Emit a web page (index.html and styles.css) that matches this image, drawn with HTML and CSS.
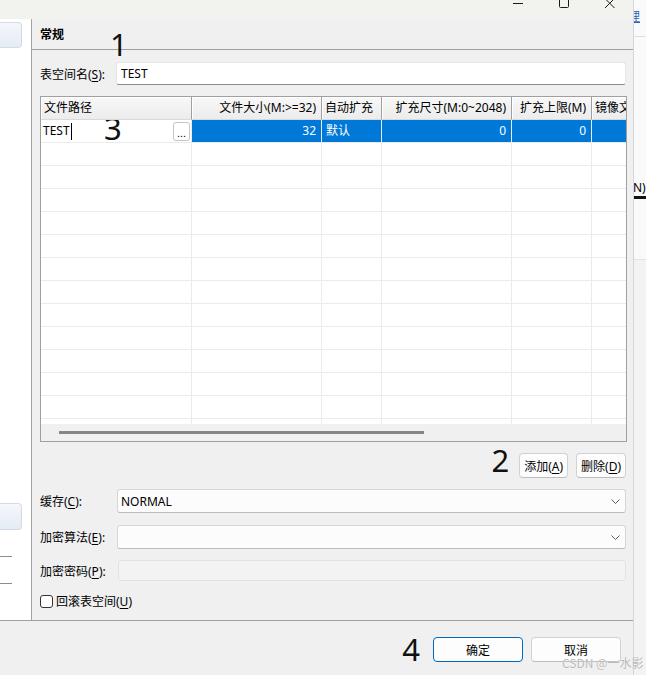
FILE: index.html
```html
<!DOCTYPE html>
<html lang="zh-CN">
<head>
<meta charset="UTF-8" />
<meta name="viewport" content="width=device-width, initial-scale=1" />
<title>表空间</title>
<link rel="stylesheet" href="styles.css">
</head>
<body>

<div class="screen">
  <div class="dialog">
    <div class="titlebar">
      <span class="winbtn"><svg width="10" height="8" viewBox="0 0 10 8"><path d="M0 3.5H10" /></svg></span>
      <span class="winbtn"><svg width="10" height="8" viewBox="0 0 10 8"><path d="M0.5 0V6.5Q0.5 7.5 1.5 7.5H8.5Q9.5 7.5 9.5 6.5V0" /></svg></span>
      <span class="winbtn"><svg width="10" height="8" viewBox="0 0 10 8"><path d="M0 -1.5L9.5 8M9.5 -1.5L0 8" /></svg></span>
    </div>

    <div class="content">
      <div class="sidebar">
        <div class="side-item"></div>
        <div class="side-item lower"></div>
        <div class="side-line"></div>
        <div class="side-line"></div>
      </div>

      <div class="main">
        <div class="section-title">常规<span class="mark mark-1">1</span></div>

        <div class="form">
          <div class="field name-row">
            <label>表空间名(<u>S</u>):</label>
            <div class="textbox">TEST</div>
          </div>

          <div class="grid">
            <div class="grid-row head">
              <div class="cell">文件路径</div>
              <div class="cell num">文件大小(M:&gt;=32)</div>
              <div class="cell">自动扩充</div>
              <div class="cell num">扩充尺寸(M:0~2048)</div>
              <div class="cell num">扩充上限(M)</div>
              <div class="cell">镜像文件</div>
            </div>
            <div class="grid-body">
              <div class="grid-row selected">
                <div class="cell editing">TEST<span class="caret"></span><span class="mark mark-3">3</span><span class="browse">...</span></div>
                <div class="cell num">32</div>
                <div class="cell">默认</div>
                <div class="cell num">0</div>
                <div class="cell num">0</div>
                <div class="cell"></div>
              </div>
              <div class="grid-row"><div class="cell"></div><div class="cell"></div><div class="cell"></div><div class="cell"></div><div class="cell"></div><div class="cell"></div></div>
              <div class="grid-row"><div class="cell"></div><div class="cell"></div><div class="cell"></div><div class="cell"></div><div class="cell"></div><div class="cell"></div></div>
              <div class="grid-row"><div class="cell"></div><div class="cell"></div><div class="cell"></div><div class="cell"></div><div class="cell"></div><div class="cell"></div></div>
              <div class="grid-row"><div class="cell"></div><div class="cell"></div><div class="cell"></div><div class="cell"></div><div class="cell"></div><div class="cell"></div></div>
              <div class="grid-row"><div class="cell"></div><div class="cell"></div><div class="cell"></div><div class="cell"></div><div class="cell"></div><div class="cell"></div></div>
              <div class="grid-row"><div class="cell"></div><div class="cell"></div><div class="cell"></div><div class="cell"></div><div class="cell"></div><div class="cell"></div></div>
              <div class="grid-row"><div class="cell"></div><div class="cell"></div><div class="cell"></div><div class="cell"></div><div class="cell"></div><div class="cell"></div></div>
              <div class="grid-row"><div class="cell"></div><div class="cell"></div><div class="cell"></div><div class="cell"></div><div class="cell"></div><div class="cell"></div></div>
              <div class="grid-row"><div class="cell"></div><div class="cell"></div><div class="cell"></div><div class="cell"></div><div class="cell"></div><div class="cell"></div></div>
              <div class="grid-row"><div class="cell"></div><div class="cell"></div><div class="cell"></div><div class="cell"></div><div class="cell"></div><div class="cell"></div></div>
              <div class="grid-row"><div class="cell"></div><div class="cell"></div><div class="cell"></div><div class="cell"></div><div class="cell"></div><div class="cell"></div></div>
              <div class="grid-row"><div class="cell"></div><div class="cell"></div><div class="cell"></div><div class="cell"></div><div class="cell"></div><div class="cell"></div></div>
              <div class="grid-row"><div class="cell"></div><div class="cell"></div><div class="cell"></div><div class="cell"></div><div class="cell"></div><div class="cell"></div></div>
            </div>
            <div class="hscroll"><div class="thumb"></div></div>
          </div>

          <div class="grid-actions">
            <span class="mark">2</span>
            <button class="btn">添加(<u>A</u>)</button>
            <button class="btn">删除(<u>D</u>)</button>
          </div>

          <div class="field cache-row">
            <label>缓存(<u>C</u>):</label>
            <div class="combo">NORMAL<svg class="chevron" width="9" height="5" viewBox="0 0 9 5"><path d="M0.5 0.5L4.5 4.5L8.5 0.5" /></svg></div>
          </div>

          <div class="field algo-row">
            <label>加密算法(<u>E</u>):</label>
            <div class="combo"><svg class="chevron" width="9" height="5" viewBox="0 0 9 5"><path d="M0.5 0.5L4.5 4.5L8.5 0.5" /></svg></div>
          </div>

          <div class="field pwd-row">
            <label>加密密码(<u>P</u>):</label>
            <div class="textbox disabled"></div>
          </div>

          <div class="check-row">
            <span class="checkbox"></span>
            <span>回滚表空间(<u>U</u>)</span>
          </div>
        </div>
      </div>
    </div>

    <div class="footer">
      <span class="mark">4</span>
      <button class="btn wide primary">确定</button>
      <button class="btn wide">取消</button>
    </div>
  </div>

  <div class="behind">
    <span class="behind-link">理</span>
    <div class="behind-rule"></div>
    <span class="behind-text">N)</span>
    <div class="behind-bar"></div>
    <div class="behind-lower"></div>
  </div>
</div>

<div class="watermark">CSDN @一水影</div>

</body>
</html>
```

FILE: styles.css
```css
body {
  margin: 0;
  width: 646px;
  height: 675px;
  overflow: hidden;
  font-family: "Noto Sans", "Noto Sans CJK SC", sans-serif;
  font-size: 12px;
  color: #000;
  background: #f0f0f0;
  position: relative;
}

u {
  text-decoration: underline;
  text-underline-offset: 2px;
}

.screen {
  display: flex;
  height: 675px;
}

.dialog {
  width: 634px;
  flex: none;
  display: flex;
  flex-direction: column;
  background: #f0f0f0;
}

/* window caption, top cut off */
.titlebar {
  height: 19px;
  background: #f2f3ee;
  display: flex;
  justify-content: flex-end;
  padding-right: 1px;
}

.winbtn {
  width: 46px;
  display: flex;
  justify-content: center;
  align-items: flex-start;
}

.winbtn svg {
  fill: none;
  stroke: #1a1a1a;
  stroke-width: 1;
}

.content {
  height: 601px;
  display: flex;
}

/* navigation column on the left */
.sidebar {
  width: 32px;
  flex: none;
  box-sizing: border-box;
  border-right: 1px solid #a3a3a3;
  background: #fff;
  display: flex;
  flex-direction: column;
}

.side-item {
  width: 22px;
  height: 26px;
  margin-top: 3px;
  box-sizing: border-box;
  border: 1px solid #d4dbe4;
  border-left: none;
  border-radius: 0 4px 4px 0;
  background: linear-gradient(#f4f7fb, #e6ecf4);
}

.side-item.lower {
  height: 27px;
  margin-top: 455px;
}

.side-line {
  width: 12px;
  height: 1px;
  margin-top: 26px;
  background: #8c8c8c;
}

.main {
  flex: 1;
  min-width: 0;
  border-right: 1px solid #d6d6d6;
  display: flex;
  flex-direction: column;
}

.section-title {
  height: 31px;
  box-sizing: border-box;
  padding: 6px 0 0 8px;
  line-height: 17px;
  font-family: "Noto Sans CJK SC", sans-serif;
  font-weight: bold;
  border-bottom: 1px solid #a0a0a0;
  position: relative;
}

/* hand-written step numbers */
.mark {
  font-family: "Noto Sans", sans-serif;
  font-size: 31px;
  line-height: 1;
  font-weight: 400;
  color: #111;
}

.mark-1 {
  position: absolute;
  left: 78px;
  top: 10px;
}

.mark-3 {
  position: absolute;
  left: 63px;
  top: -7px;
}

.form {
  padding: 0 7px 0 8px;
  min-width: 0;
  display: flex;
  flex-direction: column;
}

.field {
  display: flex;
  align-items: center;
}

.field label {
  width: 77px;
  flex: none;
}

.name-row {
  margin-top: 12px;
}

.name-row label {
  width: 76px;
}

.textbox {
  flex: 1;
  height: 23px;
  box-sizing: border-box;
  background: #fff;
  border: 1px solid #e6e6e6;
  border-bottom-color: #8a8a8a;
  border-radius: 3px;
  padding-left: 4px;
  line-height: 21px;
}

.textbox.disabled {
  height: 21px;
  background: #f3f3f3;
  border-color: #e2e2e2;
}

/* file list */
.grid {
  margin-top: 11px;
  margin-right: -1px;
  height: 346px;
  box-sizing: border-box;
  border: 1px solid #a0a0a0;
  background: #fff;
  overflow: hidden;
  display: flex;
  flex-direction: column;
}

.grid-row {
  display: grid;
  grid-template-columns: 151px 130px 60px 130px 80px 80px;
  flex: none;
}

.cell {
  height: 23px;
  box-sizing: border-box;
  border-right: 1px solid #ebebeb;
  border-bottom: 1px solid #ebebeb;
  padding: 0 4px;
  line-height: 22px;
  white-space: nowrap;
  overflow: hidden;
}

.cell.num {
  text-align: right;
  padding-right: 5px;
}

.head .cell {
  background: linear-gradient(#f8f8f8, #ececec);
  border-right: 1px solid #a0a0a0;
  border-bottom: 1px solid #d9d9d9;
  box-shadow: inset 1px 1px #fff;
  padding-left: 3px;
}

.head .cell.num {
  padding-right: 5px;
}

.grid-body {
  height: 304px;
  overflow: hidden;
  flex: none;
}

.selected .cell {
  background: #0078d7;
  color: #fff;
}

.selected .cell.editing {
  background: #fff;
  color: #000;
  display: flex;
  align-items: center;
  padding: 0 0 0 2px;
  position: relative;
  overflow: visible;
}

.caret {
  width: 1px;
  height: 17px;
  margin-left: 1px;
  background: #000;
}

.browse {
  margin-left: auto;
  margin-right: 1px;
  width: 17px;
  height: 19px;
  box-sizing: border-box;
  border: 1px solid #c4c4c4;
  border-radius: 3px;
  background: #fff;
  font-family: "Liberation Sans", sans-serif;
  font-size: 11px;
  line-height: 20px;
  text-align: center;
}

.hscroll {
  height: 17px;
  background: #f0f0f0;
  padding: 7px 0 0 18px;
  box-sizing: border-box;
}

.thumb {
  width: 365px;
  height: 3px;
  background: #858585;
}

.grid-actions {
  margin-top: 11px;
  display: flex;
  justify-content: flex-end;
  align-items: flex-start;
  gap: 8px;
}

.grid-actions .mark {
  line-height: 25px;
  margin: -5px 2px 0 0;
}

.btn {
  height: 25px;
  padding: 0 4px;
  font-family: "Noto Sans", "Noto Sans CJK SC", sans-serif;
  font-size: 12px;
  color: #000;
  background: #fdfdfd;
  border: 1px solid #d2d2d2;
  border-bottom-color: #bdbdbd;
  border-radius: 4px;
}

.combo {
  flex: 1;
  height: 24px;
  box-sizing: border-box;
  background: #fcfcfc;
  border: 1px solid #d6d6d6;
  border-bottom-color: #bcbcbc;
  border-radius: 3px;
  padding: 0 5px 0 3px;
  display: flex;
  align-items: center;
}

.chevron {
  margin-left: auto;
  fill: none;
  stroke: #5c5c5c;
  stroke-width: 1;
}

.cache-row {
  margin-top: 11px;
}

.algo-row {
  margin-top: 12px;
}

.pwd-row {
  margin-top: 11px;
}

.pwd-row label {
  width: 78px;
}

.check-row {
  margin-top: 14px;
  display: flex;
  align-items: center;
  gap: 3px;
  line-height: 13px;
}

.checkbox {
  width: 13px;
  height: 13px;
  box-sizing: border-box;
  border: 1px solid #333;
  border-radius: 3px;
  background: #fff;
}

.footer {
  height: 55px;
  box-sizing: border-box;
  border-top: 1px solid #a0a0a0;
  padding: 16px 13px 0 0;
  display: flex;
  justify-content: flex-end;
  align-items: flex-start;
  gap: 8px;
}

.footer .mark {
  margin: -3px 5px 0 0;
}

.btn.wide {
  width: 90px;
  height: 25px;
}

.btn.primary {
  border-color: #0067c0;
}

/* the window behind the dialog */
.behind {
  width: 12px;
  flex: none;
  background: #fafafa;
  border-left: 1px solid #d6d6d6;
  margin-left: -1px;
  display: flex;
  flex-direction: column;
  overflow: hidden;
}

.behind-link {
  margin: 9px 0 0 -6px;
  color: #2f63b8;
  font-family: "Noto Sans CJK SC", sans-serif;
  line-height: 14px;
  text-decoration: underline;
}

.behind-rule {
  margin-top: 13px;
  height: 1px;
  background: #dedede;
}

.behind-text {
  margin-top: 144px;
  margin-left: -1px;
  line-height: 14px;
}

.behind-bar {
  margin-top: 1px;
  height: 3px;
  background: #111;
}

.behind-lower {
  margin-top: 60px;
  flex: 1;
  background: #f3f3f3;
  border-top: 1px solid #e2e2e2;
}

.watermark {
  position: absolute;
  left: 562px;
  top: 654px;
  font-family: "Noto Sans CJK SC", sans-serif;
  font-size: 12px;
  color: #b9b9b9;
  white-space: nowrap;
  text-shadow: 0 0 1px #fff;
}
```
